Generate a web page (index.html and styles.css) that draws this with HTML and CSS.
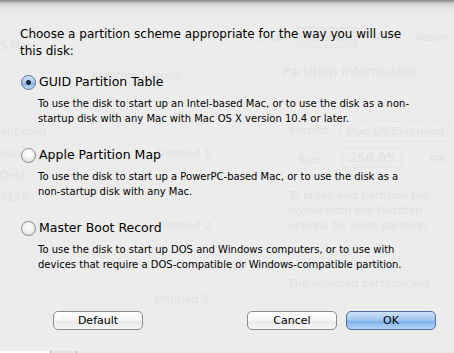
FILE: index.html
```html
<!DOCTYPE html>
<html lang="en">
<head>
    <meta charset="UTF-8">
    <title>Partition Options</title>
    <link rel="stylesheet" href="styles.css">
</head>
<body>
    <div class="sheet">
        <!-- the Disk Utility window showing through the sheet -->
        <div class="ghost">
            <span class="g" style="left:0;top:38px">S Ma</span>
            <span class="g sm" style="left:258px;top:30px">Erase</span>
            <span class="g sm tab" style="left:297px;top:27px">Partition</span>
            <span class="g sm" style="left:374px;top:30px">RAID</span>
            <span class="g sm" style="left:416px;top:30px">Restor</span>
            <span class="g" style="left:92px;top:68px">Partition Layout:</span>
            <span class="g big" style="left:283px;top:64px">Partition Information</span>
            <span class="g" style="left:0;top:124px">ant.dmg</span>
            <span class="g" style="left:0;top:146px">ssio</span>
            <span class="g" style="left:0;top:168px">Desk</span>
            <span class="g" style="left:0;top:190px">8178</span>
            <span class="g" style="left:290px;top:123px">Format:</span>
            <span class="g box" style="left:340px;top:121px">Mac OS Extended</span>
            <span class="g" style="left:298px;top:152px">Size:</span>
            <span class="g box big" style="left:342px;top:147px">250,05</span>
            <span class="g" style="left:430px;top:152px">GB</span>
            <span class="g" style="left:157px;top:146px">Untitled 1</span>
            <span class="g" style="left:157px;top:218px">Untitled 2</span>
            <span class="g" style="left:155px;top:292px">Untitled 3</span>
            <span class="g" style="left:288px;top:188px">To erase and partition the<br>layout from the Partition<br>options for each partition</span>
            <span class="g" style="left:288px;top:276px">The selected partition will</span>
        </div>

        <p class="prompt">Choose a partition scheme appropriate for the way you will use<br>this disk:</p>

        <div class="option">
            <div class="choice"><span class="radio on"></span>GUID Partition Table</div>
            <p class="desc">To use the disk to start up an Intel-based Mac, or to use the disk as a non-<br>startup disk with any Mac with Mac OS X version 10.4 or later.</p>
        </div>
        <div class="option">
            <div class="choice"><span class="radio"></span>Apple Partition Map</div>
            <p class="desc">To use the disk to start up a PowerPC-based Mac, or to use the disk as a<br>non-startup disk with any Mac.</p>
        </div>
        <div class="option">
            <div class="choice"><span class="radio"></span>Master Boot Record</div>
            <p class="desc">To use the disk to start up DOS and Windows computers, or to use with<br>devices that require a DOS-compatible or Windows-compatible partition.</p>
        </div>

        <div class="actions">
            <button class="btn">Default</button>
            <span class="spacer"></span>
            <button class="btn">Cancel</button>
            <button class="btn default">OK</button>
        </div>
    </div>
    <div class="under">
        <span class="u1"></span><span class="u2"></span><span class="u3"></span><span class="u4"></span>
    </div>
</body>
</html>
```

FILE: styles.css
```css
html, body {
    margin: 0;
    padding: 0;
    background: #ececec;
}
body {
    font-family: "DejaVu Sans", "Liberation Sans", sans-serif;
    color: #000;
    width: 454px;
    height: 353px;
    overflow: hidden;
}
.sheet {
    position: relative;
    height: 351px;
    box-sizing: border-box;
    padding: 26px 0 0 20px;
    background: linear-gradient(#8e8e8e 0, #a9a9a9 2px, #cdcdcd 3px, #e2e2e2 7px, #ececec 12px);
    overflow: hidden;
}
.ghost {
    position: absolute;
    inset: 0;
    pointer-events: none;
}
.g {
    position: absolute;
    font-size: 11px;
    line-height: 15px;
    color: #e1e1e1;
    white-space: nowrap;
}
.g.big {
    font-size: 13px;
}
.g.sm {
    font-size: 10px;
}
.g.tab {
    padding: 2px 8px;
    border: 1px solid #e4e4e4;
    background: #e9e9e9;
}
.g.box {
    padding: 2px 6px;
    border: 1px solid #e5e5e5;
}
.prompt {
    position: relative;
    margin: 0 0 14px;
    font-size: 12px;
    line-height: 17px;
}
.option {
    position: relative;
    margin-bottom: 21px;
}
.choice {
    display: flex;
    align-items: center;
    gap: 3px;
    font-size: 12.5px;
    line-height: 16px;
}
.radio {
    width: 13px;
    height: 13px;
    margin-left: 1px;
    border-radius: 50%;
    border: 1px solid #8b8b8b;
    background: radial-gradient(circle at 50% 35%, #ffffff 0, #f2f2f2 45%, #d6d6d6 100%);
    box-sizing: content-box;
    flex: none;
}
.radio.on {
    border-color: #5a6f91;
    background: radial-gradient(circle, #1d2a3c 0, #1d2a3c 2px, transparent 3px),
        linear-gradient(#d4e4f7, #a5c6ee 50%, #7fb0ea 51%, #c4dcf8);
}
.desc {
    margin: 6px 0 0 18px;
    font-size: 10px;
    line-height: 15px;
}
.actions {
    position: relative;
    display: flex;
    gap: 9px;
    margin: 39px 18px 0 33px;
}
.spacer {
    flex: 1;
}
.btn {
    width: 90px;
    height: 19px;
    padding: 0;
    font-family: inherit;
    font-size: 11px;
    color: #000;
    border: 1px solid #8a8a8a;
    border-radius: 5px;
    background: linear-gradient(#ffffff, #f4f4f4 50%, #e8e8e8 51%, #f6f6f6);
}
.btn.default {
    border-color: #4e6e9c;
    background: linear-gradient(#cfe2f8, #9cc3ef 50%, #7bb0ec 51%, #b4d4f7);
}
.under {
    display: flex;
    height: 2px;
    background: #e7e7e7;
}
.u1 { width: 50px; background: #fff; }
.u2 { width: 1px; background: #b0b0b0; }
.u3 { width: 25px; background: #e4e4e4; }
.u4 { width: 1px; background: #b0b0b0; }
```
